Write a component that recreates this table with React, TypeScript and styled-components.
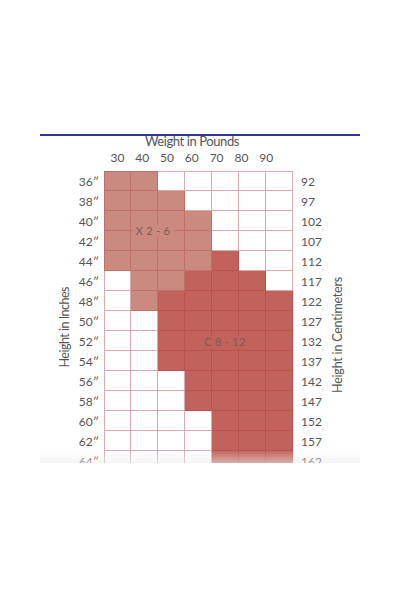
import React from "react";
import styled, { createGlobalStyle } from "styled-components";

const Global = createGlobalStyle`
  html, body { margin: 0; padding: 0; background: #ffffff; }
  body { font-family: "Lato", "Open Sans", sans-serif; color: #555; }
`;

type Fill = "L" | "D" | "W";

const ROWS: string[] = [
  "LLWWWWW",
  "LLLWWWW",
  "LLLLWWW",
  "LLLLWWW",
  "LLLLDWW",
  "WLLDDDW",
  "WLDDDDD",
  "WWDDDDD",
  "WWDDDDD",
  "WWDDDDD",
  "WWWDDDD",
  "WWWDDDD",
  "WWWWDDD",
  "WWWWDDD",
  "WWWWDDD",
];

const INCHES = [36, 38, 40, 42, 44, 46, 48, 50, 52, 54, 56, 58, 60, 62, 64];
const CMS = [92, 97, 102, 107, 112, 117, 122, 127, 132, 137, 142, 147, 152, 157, 162];
const POUNDS = [30, 40, 50, 60, 70, 80, 90];

const COLORS: Record<Fill, string> = {
  L: "#cb8a7f",
  D: "#c1625c",
  W: "#ffffff",
};

const Page = styled.div`
  width: 320px;
  margin: 0 auto;
  padding-top: 134px;
`;

const Rule = styled.div`
  height: 2px;
  background: #34349e;
`;

const Title = styled.div`
  margin-top: -2px;
  padding-right: 16px;
  text-align: center;
  font-size: 13px;
  line-height: 14px;
  color: #555;
  letter-spacing: -0.4px;
`;

const PoundsRow = styled.div`
  display: flex;
  padding-left: 65px;
  margin-top: 2px;
  height: 16px;
`;

const Pound = styled.span`
  width: 24.8px;
  text-align: center;
  font-size: 12px;
  line-height: 16px;
  color: #555;
`;

const Body = styled.div`
  position: relative;
  display: flex;
  margin-top: 5px;
  height: 292px;
  overflow: hidden;
`;

const Fade = styled.div`
  position: absolute;
  left: 0;
  right: 0;
  bottom: 0;
  height: 13px;
  background: linear-gradient(rgba(236, 236, 236, 0), rgba(236, 236, 236, 0.55));
  pointer-events: none;
`;

const SideLabel = styled.div<{ $w: number; $ml: number; $top: number }>`
  width: ${(p) => p.$w}px;
  margin-left: ${(p) => p.$ml}px;
  height: 300px;
  padding-top: ${(p) => p.$top}px;
  box-sizing: border-box;
  flex-shrink: 0;
  display: flex;
  justify-content: center;
  align-items: center;
`;

const Vertical = styled.span<{ $ls: number }>`
  writing-mode: vertical-rl;
  transform: rotate(180deg);
  font-size: 12.5px;
  line-height: 16px;
  color: #555;
  white-space: nowrap;
  letter-spacing: ${(p) => p.$ls}px;
`;

const LabelCol = styled.div<{ $w: number; $align: "left" | "right"; $pl?: number; $pr?: number }>`
  width: ${(p) => p.$w}px;
  padding-left: ${(p) => p.$pl ?? 0}px;
  padding-right: ${(p) => p.$pr ?? 0}px;
  display: flex;
  flex-direction: column;
  text-align: ${(p) => p.$align};
  flex-shrink: 0;
`;

const Tick = styled.div`
  height: 20px;
  line-height: 22px;
  font-size: 12px;
  color: #555;
  white-space: nowrap;
`;

const Grid = styled.div`
  position: relative;
  flex-shrink: 0;
  display: grid;
  grid-template-columns: repeat(7, 27px);
  grid-auto-rows: 20px;
  width: 189px;
  align-self: flex-start;
`;

const lineFor = (f: Fill) => (f === "W" ? "#dba8b0" : "rgba(160, 40, 50, 0.26)");

const Cell = styled.div<{ $fill: Fill; $top: boolean; $left: boolean }>`
  box-sizing: border-box;
  background: ${(p) => COLORS[p.$fill]};
  border-right: 1px solid ${(p) => lineFor(p.$fill)};
  border-bottom: 1px solid ${(p) => lineFor(p.$fill)};
  border-left: ${(p) => (p.$left ? `1px solid ${lineFor(p.$fill)}` : "none")};
  border-top: ${(p) => (p.$top ? `1px solid ${lineFor(p.$fill)}` : "none")};
`;

const Zone = styled.span<{ $x: number; $y: number; $bg: string }>`
  position: absolute;
  left: ${(p) => p.$x}px;
  top: ${(p) => p.$y}px;
  transform: translate(-50%, -50%);
  background: ${(p) => p.$bg};
  padding: 0 3px;
  font-size: 11px;
  line-height: 12px;
  color: #7e5b57;
  white-space: nowrap;
  letter-spacing: 0.3px;
`;

export default function App() {
  return (
    <>
      <Global />
      <Page>
        <Rule />
        <Title>Weight in Pounds</Title>
        <PoundsRow>
          {POUNDS.map((p) => (
            <Pound key={p}>{p}</Pound>
          ))}
        </PoundsRow>
        <Body>
          <SideLabel $w={16} $ml={17} $top={12}>
            <Vertical $ls={-0.5}>Height in Inches</Vertical>
          </SideLabel>
          <LabelCol $w={26} $align="right" $pr={5}>
            {INCHES.map((i) => (
              <Tick key={i}>{i}″</Tick>
            ))}
          </LabelCol>
          <Grid>
            {ROWS.map((row, r) =>
              row.split("").map((f, c) => (
                <Cell key={`${r}-${c}`} $fill={f as Fill} $top={r === 0} $left={c === 0} />
              ))
            )}
            <Zone $x={49} $y={60} $bg={COLORS.L}>X 2 - 6</Zone>
            <Zone $x={121} $y={171} $bg={COLORS.D}>C 8 - 12</Zone>
          </Grid>
          <LabelCol $w={29} $align="left" $pl={8}>
            {CMS.map((c) => (
              <Tick key={c}>{c}</Tick>
            ))}
          </LabelCol>
          <SideLabel $w={16} $ml={0} $top={28}>
            <Vertical $ls={-0.2}>Height in Centimeters</Vertical>
          </SideLabel>
          <Fade />
        </Body>
      </Page>
    </>
  );
}
